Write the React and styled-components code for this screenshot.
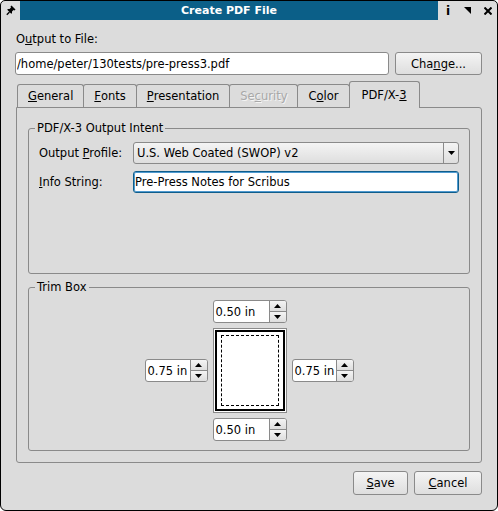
import React from "react";
import styled, { createGlobalStyle } from "styled-components";

const GlobalStyle = createGlobalStyle`
  html, body {
    margin: 0;
    padding: 0;
    background: #fff;
  }
  body {
    font-family: "DejaVu Sans", "Liberation Sans", sans-serif;
    font-size: 11.5px;
    color: #000;
  }
`;

const Window = styled.div`
  width: 498px;
  height: 511px;
  box-sizing: border-box;
  border: 1px solid #000;
  border-radius: 5px 5px 6px 6px;
  background: #dcdcdc;
  display: flex;
  flex-direction: column;
  overflow: hidden;
`;

const TitleBar = styled.div`
  display: flex;
  height: 19px;
  flex: none;
`;

const TitleButton = styled.div`
  width: ${(p) => p.$w || 20}px;
  display: flex;
  align-items: center;
  justify-content: center;
  font-weight: bold;
  font-size: 12px;
`;

const TitleText = styled.div`
  flex: 1;
  background: #0b5f88;
  color: #fff;
  font-weight: bold;
  font-size: 11px;
  display: flex;
  align-items: center;
  justify-content: center;
`;

const Body = styled.div`
  flex: 1;
  display: flex;
  flex-direction: column;
  padding: 0 15px 15px 14px;
`;

const Label = styled.div`
  margin-top: 12px;
  line-height: 15px;
  padding-left: 1px;
`;

const U = styled.span`
  text-decoration: underline;
`;

const InputRow = styled.div`
  display: flex;
  gap: 6px;
  margin-top: 5px;
`;

const TextField = styled.input`
  flex: 1;
  height: ${(p) => p.$height || 23}px;
  box-sizing: border-box;
  border: 1px solid ${(p) => (p.$focused ? "#0f5d8b" : "#8a8a8a")};
  box-shadow: ${(p) => (p.$focused ? "inset 0 0 0 1px #4f9ad0" : "none")};
  border-radius: 3px;
  background: #fff;
  padding: 0 1px;
  margin: 0;
  font-family: inherit;
  font-size: 11.5px;
  color: #000;
  outline: none;
`;

const Button = styled.button`
  width: ${(p) => p.$width}px;
  height: ${(p) => p.$height || 23}px;
  box-sizing: border-box;
  border: 1px solid #8a8a8a;
  border-radius: 3px;
  background: linear-gradient(#f4f4f4, #dedede);
  font-family: inherit;
  font-size: 11.5px;
  color: #000;
  padding: 0;
  margin: 0;
`;

const TabBar = styled.div`
  display: flex;
  align-items: flex-end;
  height: 26px;
  margin-top: 6px;
  padding-left: 3px;
`;

const Tab = styled.div`
  height: ${(p) => (p.$active ? 27 : 23)}px;
  margin-bottom: ${(p) => (p.$active ? -1 : 0)}px;
  margin-left: -1px;
  padding: 0 ${(p) => (p.$active ? 12 : 10)}px;
  box-sizing: border-box;
  border: 1px solid #8a8a8a;
  border-bottom: none;
  border-radius: 3px 3px 0 0;
  background: #dcdcdc;
  display: flex;
  align-items: center;
  position: relative;
  z-index: ${(p) => (p.$active ? 1 : 0)};
  color: ${(p) => (p.$disabled ? "#a8a8a8" : "#000")};
  text-shadow: ${(p) => (p.$disabled ? "1px 1px 0 #f4f4f4" : "none")};
`;

const Panel = styled.div`
  flex: 1;
  margin-left: 1px;
  border: 1px solid #8a8a8a;
  border-radius: 0 3px 3px 3px;
  padding: 13px 11px 11px 11px;
  display: flex;
  flex-direction: column;
  gap: 6px;
`;

const Group = styled.fieldset`
  margin: 0;
  padding: 0;
  border: 1px solid #8a8a8a;
  border-radius: 3px;
  flex: ${(p) => (p.$grow ? 1 : "none")};
  min-width: 0;
`;

const Legend = styled.legend`
  margin-left: 6px;
  padding: 0 2px;
  line-height: 15px;
`;

const FormGrid = styled.div`
  display: grid;
  grid-template-columns: 94px 1fr;
  grid-auto-rows: 22px;
  row-gap: 7px;
  align-items: center;
  padding: 6px 10px 0 10px;
`;

const Combo = styled.div`
  height: 22px;
  box-sizing: border-box;
  border: 1px solid #8a8a8a;
  border-radius: 3px;
  background: linear-gradient(#f4f4f4, #dedede);
  display: flex;
`;

const ComboText = styled.div`
  flex: 1;
  padding-left: 3px;
  display: flex;
  align-items: center;
`;

const ComboArrow = styled.div`
  width: 14px;
  border-left: 1px solid #8a8a8a;
  display: flex;
  align-items: center;
  justify-content: center;
`;

const TrimGrid = styled.div`
  display: grid;
  grid-template-columns: 63px 74px 62px;
  grid-template-rows: 23px 85px 23px;
  gap: 5px;
  justify-content: center;
  align-items: center;
  padding: 5px 0 9px 0;
`;

const Spin = styled.div`
  grid-column: ${(p) => p.$col};
  grid-row: ${(p) => p.$row};
  height: 23px;
  box-sizing: border-box;
  border: 1px solid #8a8a8a;
  border-radius: 3px;
  background: #fff;
  display: flex;
  overflow: hidden;
`;

const SpinValue = styled.div`
  flex: 1;
  padding-left: 2px;
  display: flex;
  align-items: center;
  white-space: nowrap;
`;

const SpinButtons = styled.div`
  width: 16px;
  flex: none;
  border-left: 1px solid #8a8a8a;
  display: flex;
  flex-direction: column;
`;

const SpinHalf = styled.div`
  flex: 1;
  background: linear-gradient(#f4f4f4, #dedede);
  display: flex;
  align-items: center;
  justify-content: center;
  & + & {
    border-top: 1px solid #8a8a8a;
  }
`;

const Preview = styled.div`
  grid-column: 2;
  grid-row: 2;
  height: 85px;
  box-sizing: border-box;
  border: 1px solid #8a8a8a;
  padding: 1px;
  background: #fff;
`;

const PageFrame = styled.div`
  height: 100%;
  box-sizing: border-box;
  border: 2px solid #000;
  padding: 3px 4px;
`;

const MarginBox = styled.div`
  height: 100%;
  box-sizing: border-box;
  border: 1px dashed #000;
`;

const ButtonRow = styled.div`
  display: flex;
  justify-content: flex-end;
  gap: 6px;
  margin-top: 8px;
`;

const PinIcon = () => (
  <svg width="10" height="11" viewBox="0 0 10 11">
    <path d="M5.5 0.5 L9.5 4.5 L8.5 5.5 L7.5 5 L6 6.5 L6 8.5 L5 8.5 L1.5 5 L1.5 4 L3.5 4 L5 2.5 L4.5 1.5 Z" fill="#000" />
    <path d="M3.5 7 L0.8 9.8" stroke="#000" strokeWidth="1.3" />
  </svg>
);

const CornerIcon = () => (
  <svg width="8" height="8" viewBox="0 0 8 8">
    <polygon points="0,0 7,0 7,7" fill="#000" />
  </svg>
);

const CloseIcon = () => (
  <svg width="8" height="8" viewBox="0 0 8 8">
    <path d="M0.5 0.5 L7.5 7.5 M7.5 0.5 L0.5 7.5" stroke="#000" strokeWidth="2" />
  </svg>
);

const Arrow = ({ up }) => (
  <svg width="7" height="4" viewBox="0 0 7 4">
    <polygon points={up ? "0,4 7,4 3.5,0" : "0,0 7,0 3.5,4"} fill="#000" />
  </svg>
);

function SpinBox({ value, col, row }) {
  return (
    <Spin $col={col} $row={row}>
      <SpinValue>{value}</SpinValue>
      <SpinButtons>
        <SpinHalf>
          <Arrow up />
        </SpinHalf>
        <SpinHalf>
          <Arrow />
        </SpinHalf>
      </SpinButtons>
    </Spin>
  );
}

const tabs = [
  { pre: "", u: "G", post: "eneral" },
  { pre: "", u: "F", post: "onts" },
  { pre: "", u: "P", post: "resentation" },
  { pre: "Se", u: "c", post: "urity", disabled: true },
  { pre: "C", u: "o", post: "lor" },
  { pre: "PDF/X-", u: "3", post: "", active: true },
];

export default function App() {
  return (
    <>
      <GlobalStyle />
      <Window>
        <TitleBar>
          <TitleButton $w={19}>
            <PinIcon />
          </TitleButton>
          <TitleText>Create PDF File</TitleText>
          <TitleButton>i</TitleButton>
          <TitleButton>
            <CornerIcon />
          </TitleButton>
          <TitleButton $w={19}>
            <CloseIcon />
          </TitleButton>
        </TitleBar>
        <Body>
          <Label>
            O<U>u</U>tput to File:
          </Label>
          <InputRow>
            <TextField readOnly value="/home/peter/130tests/pre-press3.pdf" />
            <Button $width={87}>
              Cha<U>n</U>ge...
            </Button>
          </InputRow>
          <TabBar>
            {tabs.map((t) => (
              <Tab key={t.pre + t.u} $active={t.active} $disabled={t.disabled}>
                {t.pre}
                <U>{t.u}</U>
                {t.post}
              </Tab>
            ))}
          </TabBar>
          <Panel>
            <Group $grow>
              <Legend>PDF/X-3 Output Intent</Legend>
              <FormGrid>
                <span>
                  Output <U>P</U>rofile:
                </span>
                <Combo>
                  <ComboText>U.S. Web Coated (SWOP) v2</ComboText>
                  <ComboArrow>
                    <Arrow />
                  </ComboArrow>
                </Combo>
                <span>
                  <U>I</U>nfo String:
                </span>
                <TextField $focused $height={22} readOnly value="Pre-Press Notes for Scribus" />
              </FormGrid>
            </Group>
            <Group>
              <Legend>Trim Box</Legend>
              <TrimGrid>
                <SpinBox value="0.50 in" col={2} row={1} />
                <SpinBox value="0.75 in" col={1} row={2} />
                <Preview>
                  <PageFrame>
                    <MarginBox />
                  </PageFrame>
                </Preview>
                <SpinBox value="0.75 in" col={3} row={2} />
                <SpinBox value="0.50 in" col={2} row={3} />
              </TrimGrid>
            </Group>
          </Panel>
          <ButtonRow>
            <Button $width={55} $height={24}>
              <U>S</U>ave
            </Button>
            <Button $width={68} $height={24}>
              <U>C</U>ancel
            </Button>
          </ButtonRow>
        </Body>
      </Window>
    </>
  );
}
